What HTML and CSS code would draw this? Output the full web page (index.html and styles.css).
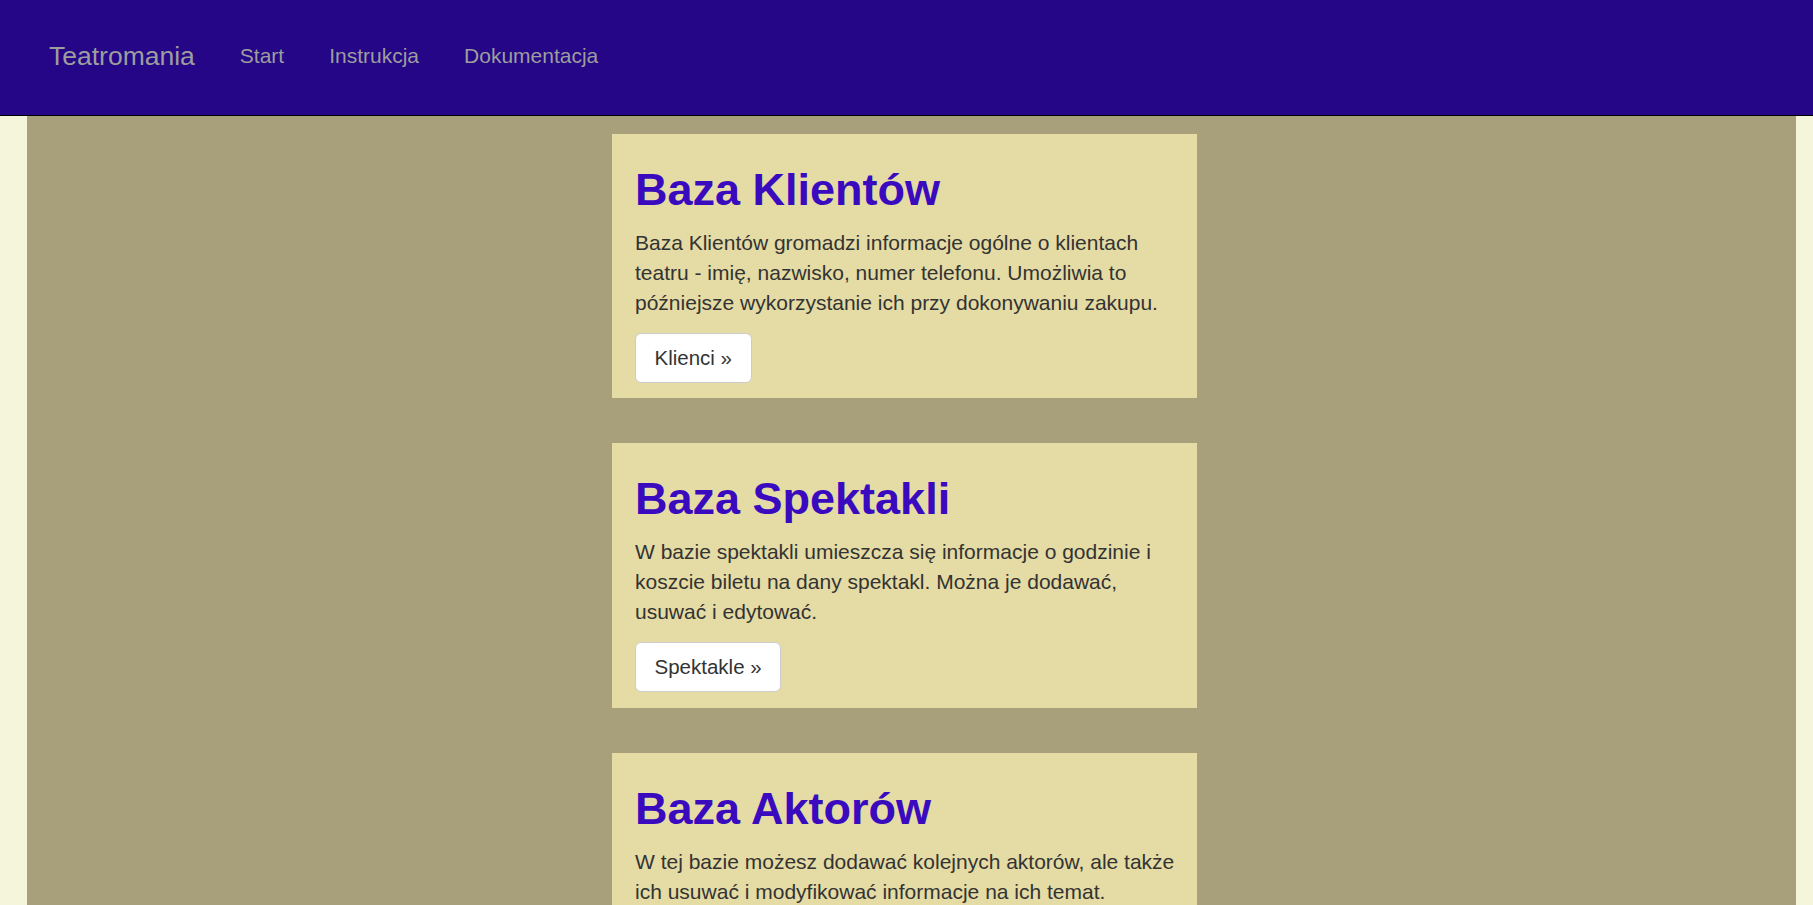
FILE: index.html
```html
<!DOCTYPE html>
<html lang="pl">
<head>
<meta charset="utf-8">
<title>Teatromania</title>
<link rel="stylesheet" href="styles.css">
</head>
<body>
<header class="navbar">
  <a class="brand" href="#">Teatromania</a>
  <nav class="nav-links">
    <a href="#">Start</a>
    <a href="#">Instrukcja</a>
    <a href="#">Dokumentacja</a>
  </nav>
</header>
<main class="content">
  <section class="card">
    <h1>Baza Klientów</h1>
    <p>Baza Klientów gromadzi informacje ogólne o klientach teatru - imię, nazwisko, numer telefonu. Umożliwia to późniejsze wykorzystanie ich przy dokonywaniu zakupu.</p>
    <a class="btn" href="#">Klienci »</a>
  </section>
  <section class="card">
    <h1>Baza Spektakli</h1>
    <p>W bazie spektakli umieszcza się informacje o godzinie i koszcie biletu na dany spektakl. Można je dodawać, usuwać i edytować.</p>
    <a class="btn" href="#">Spektakle »</a>
  </section>
  <section class="card">
    <h1>Baza Aktorów</h1>
    <p>W tej bazie możesz dodawać kolejnych aktorów, ale także ich usuwać i modyfikować informacje na ich temat.</p>
    <a class="btn" href="#">Aktorzy »</a>
  </section>
</main>
</body>
</html>
```
FILE: styles.css
```css
* { box-sizing: border-box; }

html, body {
  margin: 0;
  padding: 0;
}

body {
  background: #f5f5dc;
  font-family: "Liberation Sans", Arial, sans-serif;
  color: #333;
}

.navbar {
  height: 116px;
  background: #240687;
  border-bottom: 1px solid #000;
  display: flex;
  align-items: center;
  padding: 0 0 3px 49px;
}

.brand {
  font-size: 26.5px;
  color: #9d9d9d;
  text-decoration: none;
  padding-right: 22.5px;
}

.nav-links {
  display: flex;
}

.nav-links a {
  font-size: 21px;
  color: #9d9d9d;
  text-decoration: none;
  padding: 0 22.5px;
}

.content {
  margin: 0 17px 0 27px;
  background: #a7a07a;
  padding: 18px 14px 40px 0;
  display: flex;
  flex-direction: column;
  align-items: center;
  gap: 45px;
}

.card {
  width: 585px;
  background: #e5dba4;
  padding: 31px 21px 15.6px 23px;
}

.card h1 {
  margin: 0 0 13.5px;
  font-size: 45px;
  line-height: 49.5px;
  font-weight: bold;
  color: #3a0abf;
}

.card p {
  margin: 0 0 15px;
  font-size: 21px;
  line-height: 30px;
}

.btn {
  display: inline-block;
  padding: 10px 18.5px;
  font-size: 20.5px;
  line-height: 27.7px;
  color: #333;
  background: #fff;
  border: 1px solid #ccc;
  border-radius: 6px;
  text-decoration: none;
}
```
